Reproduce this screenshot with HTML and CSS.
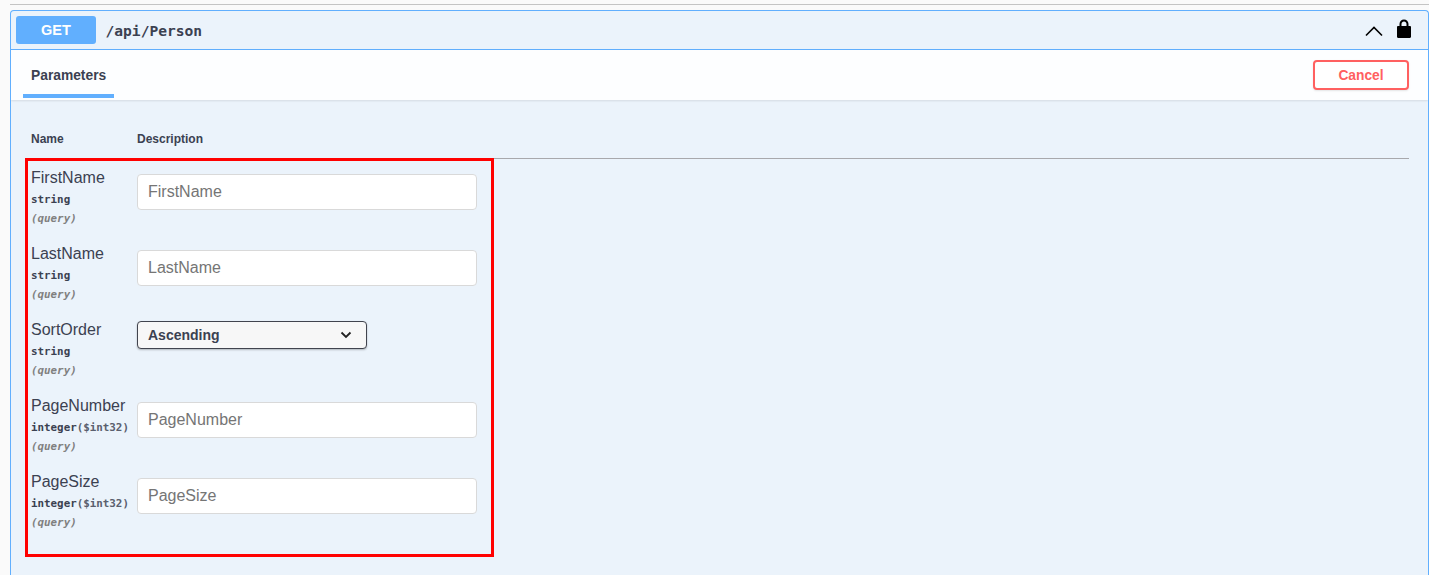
FILE: index.html
```html
<!DOCTYPE html>
<html lang="en">
<head>
    <meta charset="UTF-8">
    <meta name="viewport" content="width=device-width, initial-scale=1.0">
    <title>Swagger UI</title>
    <link rel="stylesheet" href="styles.css">
</head>
<body>
    <hr class="divider">
    <div class="opblock">
        <div class="summary">
            <span class="method">GET</span>
            <span class="path">/api/Person</span>
            <svg class="chevron" width="20" height="20" viewBox="0 0 20 20"><path d="M2 15.5 10 7.500 18 15.500" fill="none" stroke="#000" stroke-width="1.600"/></svg>
            <svg class="lock" width="20" height="20" viewBox="0 0 20 20"><path d="M15.800 7H14.500V5C14.500 2.500 12.500 .5 10 .5S5.500 2.500 5.500 5V7H4.200C3.400 7 3 7.500 3 8.200V17.800C3 18.500 3.400 19 4.200 19H15.800C16.600 19 17 18.500 17 17.800V8.200C17 7.500 16.600 7 15.800 7ZM7.500 7V5C7.500 3.600 8.600 2.500 10 2.500S12.500 3.600 12.500 5V7Z" fill="#000" fill-rule="evenodd"/></svg>
        </div>
        <div class="section-header">
            <div class="tab">Parameters</div>
            <button class="cancel">Cancel</button>
        </div>
        <div class="params">
            <div class="params-head">
                <div class="col-name">Name</div>
                <div>Description</div>
            </div>
            <div class="param">
                <div class="col-name">
                    <div class="param-name">FirstName</div>
                    <div class="param-type">string</div>
                    <div class="param-in">(query)</div>
                </div>
                <input class="param-input" type="text" placeholder="FirstName">
            </div>
            <div class="param">
                <div class="col-name">
                    <div class="param-name">LastName</div>
                    <div class="param-type">string</div>
                    <div class="param-in">(query)</div>
                </div>
                <input class="param-input" type="text" placeholder="LastName">
            </div>
            <div class="param">
                <div class="col-name">
                    <div class="param-name">SortOrder</div>
                    <div class="param-type">string</div>
                    <div class="param-in">(query)</div>
                </div>
                <div class="select">
                    <span>Ascending</span>
                    <svg width="12" height="8" viewBox="0 0 12 8"><path d="M1.500 1.500 6 6 10.500 1.500" fill="none" stroke="#222" stroke-width="1.800"/></svg>
                </div>
            </div>
            <div class="param">
                <div class="col-name">
                    <div class="param-name">PageNumber</div>
                    <div class="param-type">integer<span class="format">($int32)</span></div>
                    <div class="param-in">(query)</div>
                </div>
                <input class="param-input" type="text" placeholder="PageNumber">
            </div>
            <div class="param">
                <div class="col-name">
                    <div class="param-name">PageSize</div>
                    <div class="param-type">integer<span class="format">($int32)</span></div>
                    <div class="param-in">(query)</div>
                </div>
                <input class="param-input" type="text" placeholder="PageSize">
            </div>
        </div>
    </div>
    <div class="highlight"></div>
</body>
</html>
```

FILE: styles.css
```css
html, body {
    height: 100%;
}
body {
    margin: 0;
    background: #fafafa;
    font-family: "Liberation Sans", Arial, sans-serif;
    color: #3b4151;
    overflow: hidden;
    position: relative;
}
.divider {
    margin: 4px 0 5px 10px;
    height: 1px;
    border: 0;
    background: #c4c4c4;
}
.opblock {
    margin-left: 10px;
    height: 565px;
    background: #ebf3fb;
    border: 1px solid #61affe;
    border-bottom: 0;
    border-radius: 4px 4px 0 0;
    box-sizing: border-box;
    overflow: hidden;
}
.summary {
    display: flex;
    align-items: center;
    height: 38px;
    padding: 0 15px 0 5px;
    border-bottom: 1px solid #61affe;
}
.method {
    width: 80px;
    height: 28px;
    line-height: 28px;
    text-align: center;
    background: #61affe;
    color: #fff;
    font-size: 14.500px;
    font-weight: bold;
    border-radius: 3px;
}
.path {
    margin-left: 9.500px;
    flex: 1;
    font-family: "DejaVu Sans Mono", monospace;
    font-size: 14.600px;
    font-weight: bold;
    color: #3b4151;
}
.chevron {
    margin-right: 10px;
    margin-left: 1px;
}
.lock {
    margin-right: -1px;
    margin-bottom: 3px;
}
.section-header {
    display: flex;
    justify-content: space-between;
    align-items: center;
    height: 50px;
    box-sizing: border-box;
    padding: 0 19px 0 12px;
    background: rgba(255, 255, 255, .9);
    box-shadow: 0 1px 2px rgba(0, 0, 0, .1);
}
.tab {
    align-self: flex-start;
    width: 91px;
    height: 48px;
    box-sizing: border-box;
    padding: 18px 0 0 8px;
    border-bottom: 4px solid #61affe;
    font-size: 13.800px;
    font-weight: bold;
    color: #3b4151;
}
.cancel {
    width: 96px;
    height: 30px;
    padding: 0;
    background: #fff;
    border: 2px solid #ff6060;
    border-radius: 4px;
    box-shadow: 0 1px 2px rgba(0, 0, 0, .1);
    color: #ff6060;
    font-family: "Liberation Sans", Arial, sans-serif;
    font-size: 13.800px;
    font-weight: bold;
}
.params {
    padding: 32px 19px 0 20px;
}
.params-head {
    display: flex;
    height: 26px;
    font-size: 12px;
    font-weight: bold;
    border-bottom: 1px solid #a8a8ac;
    line-height: 14px;
}
.col-name {
    width: 106px;
    flex-shrink: 0;
}
.param {
    display: flex;
    height: 76px;
    align-items: flex-start;
}
.params-head + .param {
    margin-top: 10px;
}
.param-name {
    font-size: 16px;
    line-height: 18px;
}
.param-type {
    font-family: "DejaVu Sans Mono", monospace;
    font-size: 10.850px;
    font-weight: bold;
    line-height: 19px;
    margin-top: 3px;
}
.format {
    color: #5a5f6e;
}
.param-in {
    font-family: "DejaVu Sans Mono", monospace;
    font-size: 10.850px;
    font-weight: bold;
    font-style: italic;
    color: #808080;
    line-height: 19px;
}
.param-input {
    width: 340px;
    height: 36px;
    box-sizing: border-box;
    margin: 5px 0 0 0;
    padding: 0 10px;
    background: #fff;
    border: 1px solid #d9d9d9;
    border-radius: 4px;
    font-family: "Liberation Sans", Arial, sans-serif;
    font-size: 16px;
    outline: none;
}
.param-input::placeholder {
    color: #757575;
    opacity: 1;
}
.select {
    display: flex;
    justify-content: space-between;
    align-items: center;
    width: 230px;
    height: 28px;
    box-sizing: border-box;
    padding: 0 14px 0 10px;
    background: #f7f7f7;
    border: 1px solid #41444e;
    border-radius: 4px;
    box-shadow: 0 1px 2px rgba(0, 0, 0, .25);
    font-size: 14px;
    font-weight: bold;
    color: #3b4151;
}
.highlight {
    position: absolute;
    left: 25px;
    top: 158px;
    width: 469px;
    height: 399px;
    box-sizing: border-box;
    border: 3px solid #ff0000;
}
```
